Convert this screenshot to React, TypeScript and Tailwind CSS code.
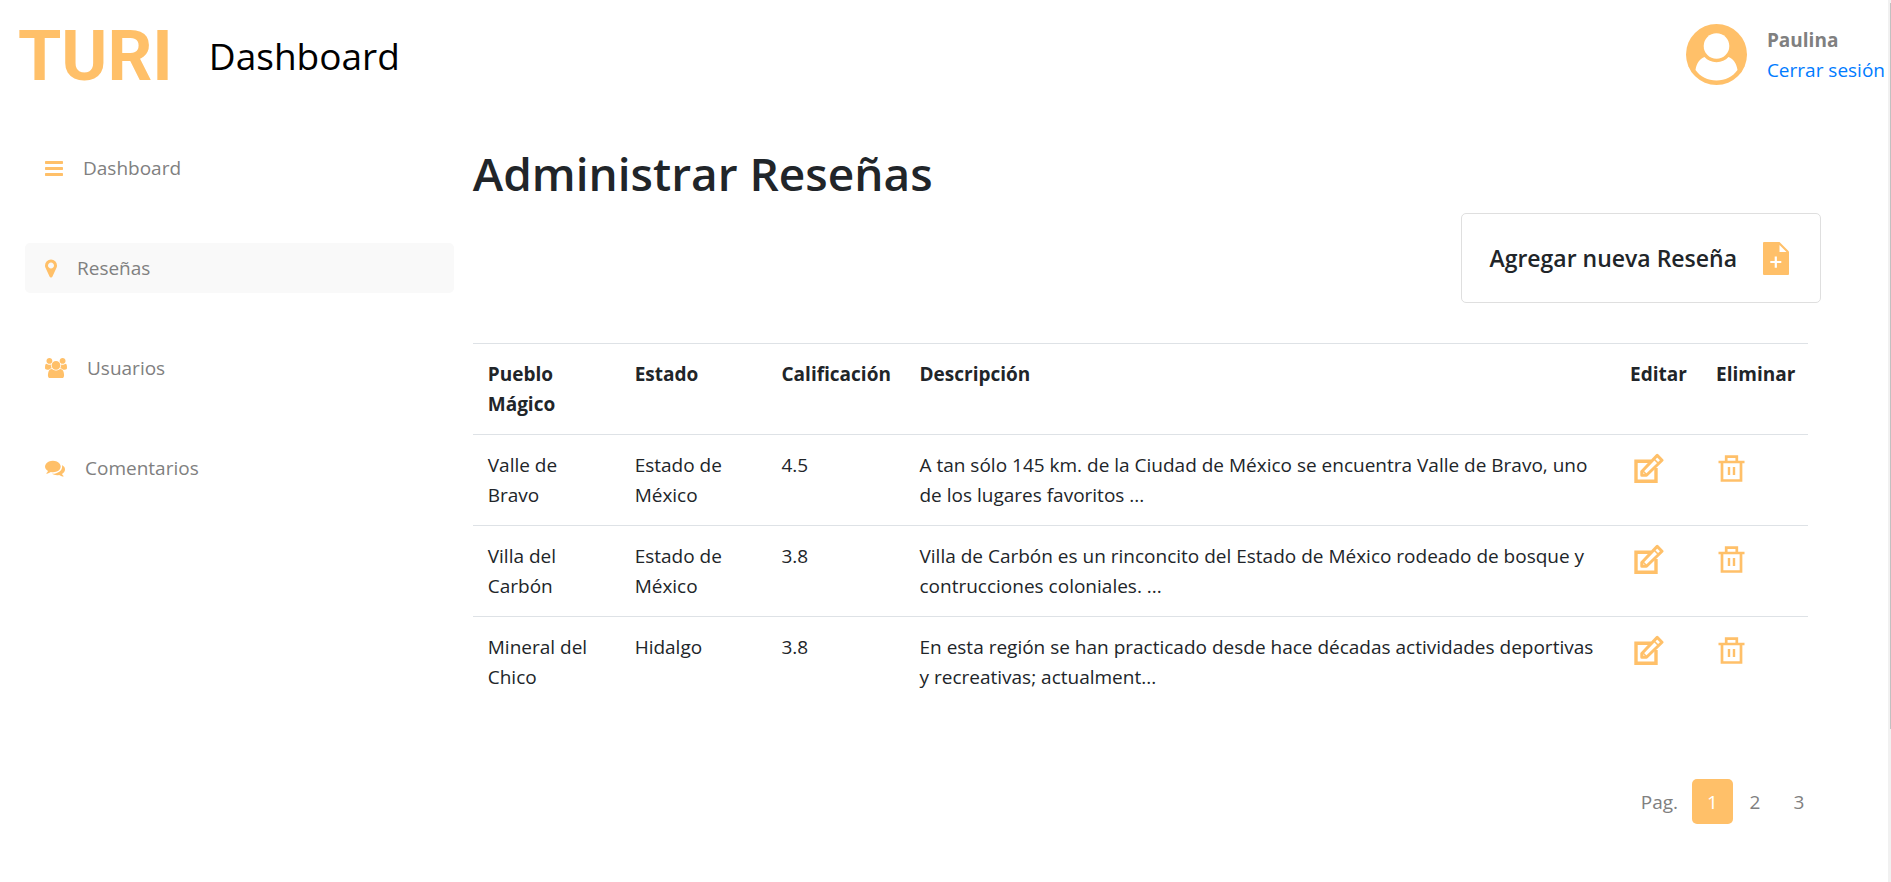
import React from "react";

const MARKER =
  "M768 640q0-106-75-181t-181-75-181 75-75 181 75 181 181 75 181-75 75-181zm256 0q0 109-33 179l-364 774q-16 33-47.5 52t-67.5 19-67.5-19-46.5-52l-365-774q-33-70-33-179 0-212 150-362t362-150 362 150 150 362z";
const BARS =
  "M1536 1344v128q0 26-19 45t-45 19h-1408q-26 0-45-19t-19-45v-128q0-26 19-45t45-19h1408q26 0 45 19t19 45zm0-512v128q0 26-19 45t-45 19h-1408q-26 0-45-19t-19-45v-128q0-26 19-45t45-19h1408q26 0 45 19t19 45zm0-512v128q0 26-19 45t-45 19h-1408q-26 0-45-19t-19-45v-128q0-26 19-45t45-19h1408q26 0 45 19t19 45z";
const USERS =
  "M529 896q-162 5-265 128h-134q-82 0-138-40.5t-56-118.5q0-353 124-353 6 0 43.5 21t97.5 42.5 119 21.5q67 0 133-23-5 37-5 66 0 139 81 256zm1071 637q0 120-73 189.5t-194 69.5h-874q-121 0-194-69.5t-73-189.5q0-53 3.5-103.5t14-109 26.5-108.5 43-97.5 62-81 85.5-53.5 111.5-20q10 0 43 21.5t73 48 107 48 135 21.5 135-21.5 107-48 73-48 43-21.5q61 0 111.5 20t85.5 53.5 62 81 43 97.5 26.5 108.5 14 109 3.5 103.5zm-1024-1277q0 106-75 181t-181 75-181-75-75-181 75-181 181-75 181 75 75 181zm704 384q0 159-112.5 271.5t-271.5 112.5-271.5-112.5-112.5-271.5 112.5-271.5 271.5-112.5 271.5 112.5 112.5 271.5zm576 225q0 78-56 118.5t-138 40.5h-134q-103-123-265-128 81-117 81-256 0-29-5-66 66 23 133 23 59 0 119-21.5t97.5-42.5 43.5-21q124 0 124 353zm-128-609q0 106-75 181t-181 75-181-75-75-181 75-181 181-75 181 75 75 181z";
const COMMENTS =
  "M1408 768q0 139-94 257t-256.5 186.5-353.5 68.5q-86 0-176-16-124 88-278 128-36 9-86 16h-3q-11 0-20.5-8t-11.5-21q-1-3-1-6.5t.5-6.5 2-6l2.5-5 3.5-5.5 4-5 4.5-5 4-4.5q5-6 23-25t26-29.5 22.5-29 25-38.5 20.5-44q-124-72-195-177t-71-224q0-139 94-257t256.5-186.5 353.5-68.5 353.5 68.5 256.5 186.5 94 257zm384 256q0 120-71 224.5t-195 176.5q10 24 20.5 44t25 38.5 22.5 29 26 29.5 23 25q1 1 4 4.5t4.5 5 4 5 3.5 5.5l2.5 5t2 6 .5 6.5-1 6.5q-3 14-13 22t-22 7q-50-7-86-16-154-40-278-128-90 16-176 16-271 0-472-132 58 4 88 4 161 0 309-45t264-129q125-92 192-212t67-254q0-77-23-152 129 71 204 178t75 230z";

const navItems = [
  { label: "Dashboard", path: BARS, viewBox: "0 0 1536 1792", size: "w-[18px]", active: false },
  { label: "Reseñas", path: MARKER, viewBox: "0 0 1024 1792", size: "w-3", active: true },
  { label: "Usuarios", path: USERS, viewBox: "-64 0 1920 1792", size: "w-[22px]", active: false },
  { label: "Comentarios", path: COMMENTS, viewBox: "0 0 1792 1792", size: "w-5", active: false },
];

const reviews = [
  {
    town: "Valle de Bravo",
    state: "Estado de México",
    rating: "4.5",
    text: "A tan sólo 145 km. de la Ciudad de México se encuentra Valle de Bravo, uno de los lugares favoritos ...",
  },
  {
    town: "Villa del Carbón",
    state: "Estado de México",
    rating: "3.8",
    text: "Villa de Carbón es un rinconcito del Estado de México rodeado de bosque y contrucciones coloniales. ...",
  },
  {
    town: "Mineral del Chico",
    state: "Hidalgo",
    rating: "3.8",
    text: "En esta región se han practicado desde hace décadas actividades deportivas y recreativas; actualment...",
  },
];

function UserIcon() {
  return (
    <svg viewBox="0 0 61 61" className="size-[61px] shrink-0" aria-hidden="true">
      <circle cx="30.500" cy="30.500" r="30.500" fill="#ffc069" />
      <path
        d="M18.500 33C14 34.500 10.500 39 9.500 46C14 52.500 22 56.500 30.500 56.500C39 56.500 47 52.500 51.500 46C50.500 39 47 34.500 42.500 33C39.500 36.300 35.500 38.200 30.500 38.200C25.500 38.200 21.500 36.300 18.500 33Z"
        fill="#fff"
      />
      <circle cx="30.500" cy="22" r="14.300" fill="#ffc069" />
      <circle cx="30.500" cy="22" r="12.800" fill="#fff" />
    </svg>
  );
}

function FileAddIcon() {
  return (
    <svg viewBox="0 0 26 33" className="h-[33px] w-[26px] shrink-0" aria-hidden="true">
      <path d="M1 0H16.500L26 9.500V32Q26 33 25 33H1Q0 33 0 32V1Q0 0 1 0Z" fill="#ffc069" />
      <path d="M16.500 3V10H23.500Z" fill="#fff" />
      <path d="M11.700 14.500h2.200v4.400h4.400v2.200h-4.400v4.700h-2.200v-4.700h-4.400v-2.200h4.400z" fill="#fff" />
    </svg>
  );
}

function EditIcon() {
  return (
    <svg viewBox="0 0 30 30" className="size-[30px]" fill="none" stroke="#ffc069" aria-hidden="true">
      <path d="M17 8.200H2V28.300H22V15" strokeWidth="3.400" />
      <path d="M7.800 18.500L23.200 2.400L28 7.200L12.500 22.300H7.800Z" strokeWidth="3" strokeLinejoin="round" />
      <path d="M19.500 5.500L25 11M8.500 17.500L13 22" strokeWidth="1.600" />
    </svg>
  );
}

function TrashIcon() {
  return (
    <svg viewBox="0 0 27 27" className="size-[27px]" fill="none" stroke="#ffc069" aria-hidden="true">
      <path d="M0.500 7H26.500M8.200 7V1.700H18.800V7M4 7V25.500H23V7" strokeWidth="2.700" />
      <path d="M11 12V20M16 12V20" strokeWidth="2.400" />
    </svg>
  );
}

export default function App() {
  return (
    <div className="min-h-screen bg-white font-['Open_Sans','Noto_Sans',sans-serif] text-[19px] leading-[30px] text-[#212529]">
      <header className="flex items-start justify-between pr-[6px]">
        <div className="flex items-center pl-[18px]">
          <span className="pt-1 font-['Roboto',sans-serif] text-[70px] leading-[104px] font-bold text-[#ffc069]">TURI</span>
          <span className="pt-1 pl-9 text-[37px] leading-[48px] text-black">Dashboard</span>
        </div>
        <div className="flex items-center gap-5 pt-6">
          <UserIcon />
          <div className="flex flex-col">
            <span className="font-bold text-[#808080]">Paulina</span>
            <a href="#salir" className="text-[#007bff]">Cerrar sesión</a>
          </div>
        </div>
      </header>

      <div className="flex pt-[35px]">
        <nav className="flex w-1/4 shrink-0 flex-col gap-[50px] pr-[19px] pl-[25px]">
          {navItems.map((item) => (
            <a
              key={item.label}
              href="#"
              className={
                item.active
                  ? "flex items-center gap-5 rounded-[5px] bg-[#f9f9f9] px-5 py-[10px] text-[#808080]"
                  : "flex items-center gap-5 rounded-[5px] px-5 py-[10px] text-[#808080]"
              }
            >
              <svg viewBox={item.viewBox} className={`${item.size} shrink-0`} fill="#ffc069" aria-hidden="true">
                <path d={item.path} />
              </svg>
              {item.label}
            </a>
          ))}
        </nav>

        <main className="min-w-0 flex-1 pr-[70px]">
          <h1 className="text-[46px] leading-[60px] font-semibold">Administrar Reseñas</h1>
          <div className="flex justify-end pt-[10px]">
            <button type="button" className="flex h-[90px] items-center gap-[26px] rounded-[5px] border border-[#dfdfdf] pr-[31px] pl-[27px] text-[23px] font-semibold">
              Agregar nueva Reseña
              <FileAddIcon />
            </button>
          </div>

          <div className="pt-10 pr-[13px]">
            <table className="w-full table-fixed border-collapse text-left">
              <colgroup>
                <col className="w-[11%]" />
                <col className="w-[11%]" />
                <col className="w-[138px]" />
                <col />
                <col className="w-[86px]" />
                <col className="w-[107px]" />
              </colgroup>
              <thead>
                <tr className="border-t border-[#dee2e6] align-top">
                  {["Pueblo Mágico", "Estado", "Calificación", "Descripción", "Editar", "Eliminar"].map((title) => (
                    <th key={title} scope="col" className="px-[15px] py-[15px] font-bold">{title}</th>
                  ))}
                </tr>
              </thead>
              <tbody>
                {reviews.map((review) => (
                  <tr key={review.town} className="border-t border-[#dee2e6] align-top">
                    <td className="px-[15px] py-[15px]">{review.town}</td>
                    <td className="px-[15px] py-[15px]">{review.state}</td>
                    <td className="px-[15px] py-[15px]">{review.rating}</td>
                    <td className="px-[15px] py-[15px]">{review.text}</td>
                    <td className="px-[19px] pt-[18px]">
                      <button type="button" aria-label="Editar" className="block"><EditIcon /></button>
                    </td>
                    <td className="px-[17px] pt-5">
                      <button type="button" aria-label="Eliminar" className="block"><TrashIcon /></button>
                    </td>
                  </tr>
                ))}
              </tbody>
            </table>
          </div>

          <nav aria-label="Paginación" className="flex items-center justify-end pt-[72px] text-[#808080]">
            <span className="pr-[14px]">Pag.</span>
            <a href="#1" className="flex h-[45px] w-[41px] items-center justify-center rounded-[5px] bg-[#ffc069] text-white">1</a>
            <a href="#2" className="flex h-[45px] w-11 items-center justify-center">2</a>
            <a href="#3" className="flex h-[45px] w-11 items-center justify-center">3</a>
          </nav>
        </main>
      </div>

      <div className="fixed inset-y-0 right-0 w-[3px] bg-[#f1f1f1] pt-[3px] pl-[2px]">
        <div className="h-[726px] bg-[#c1c1c1]" />
      </div>
    </div>
  );
}
